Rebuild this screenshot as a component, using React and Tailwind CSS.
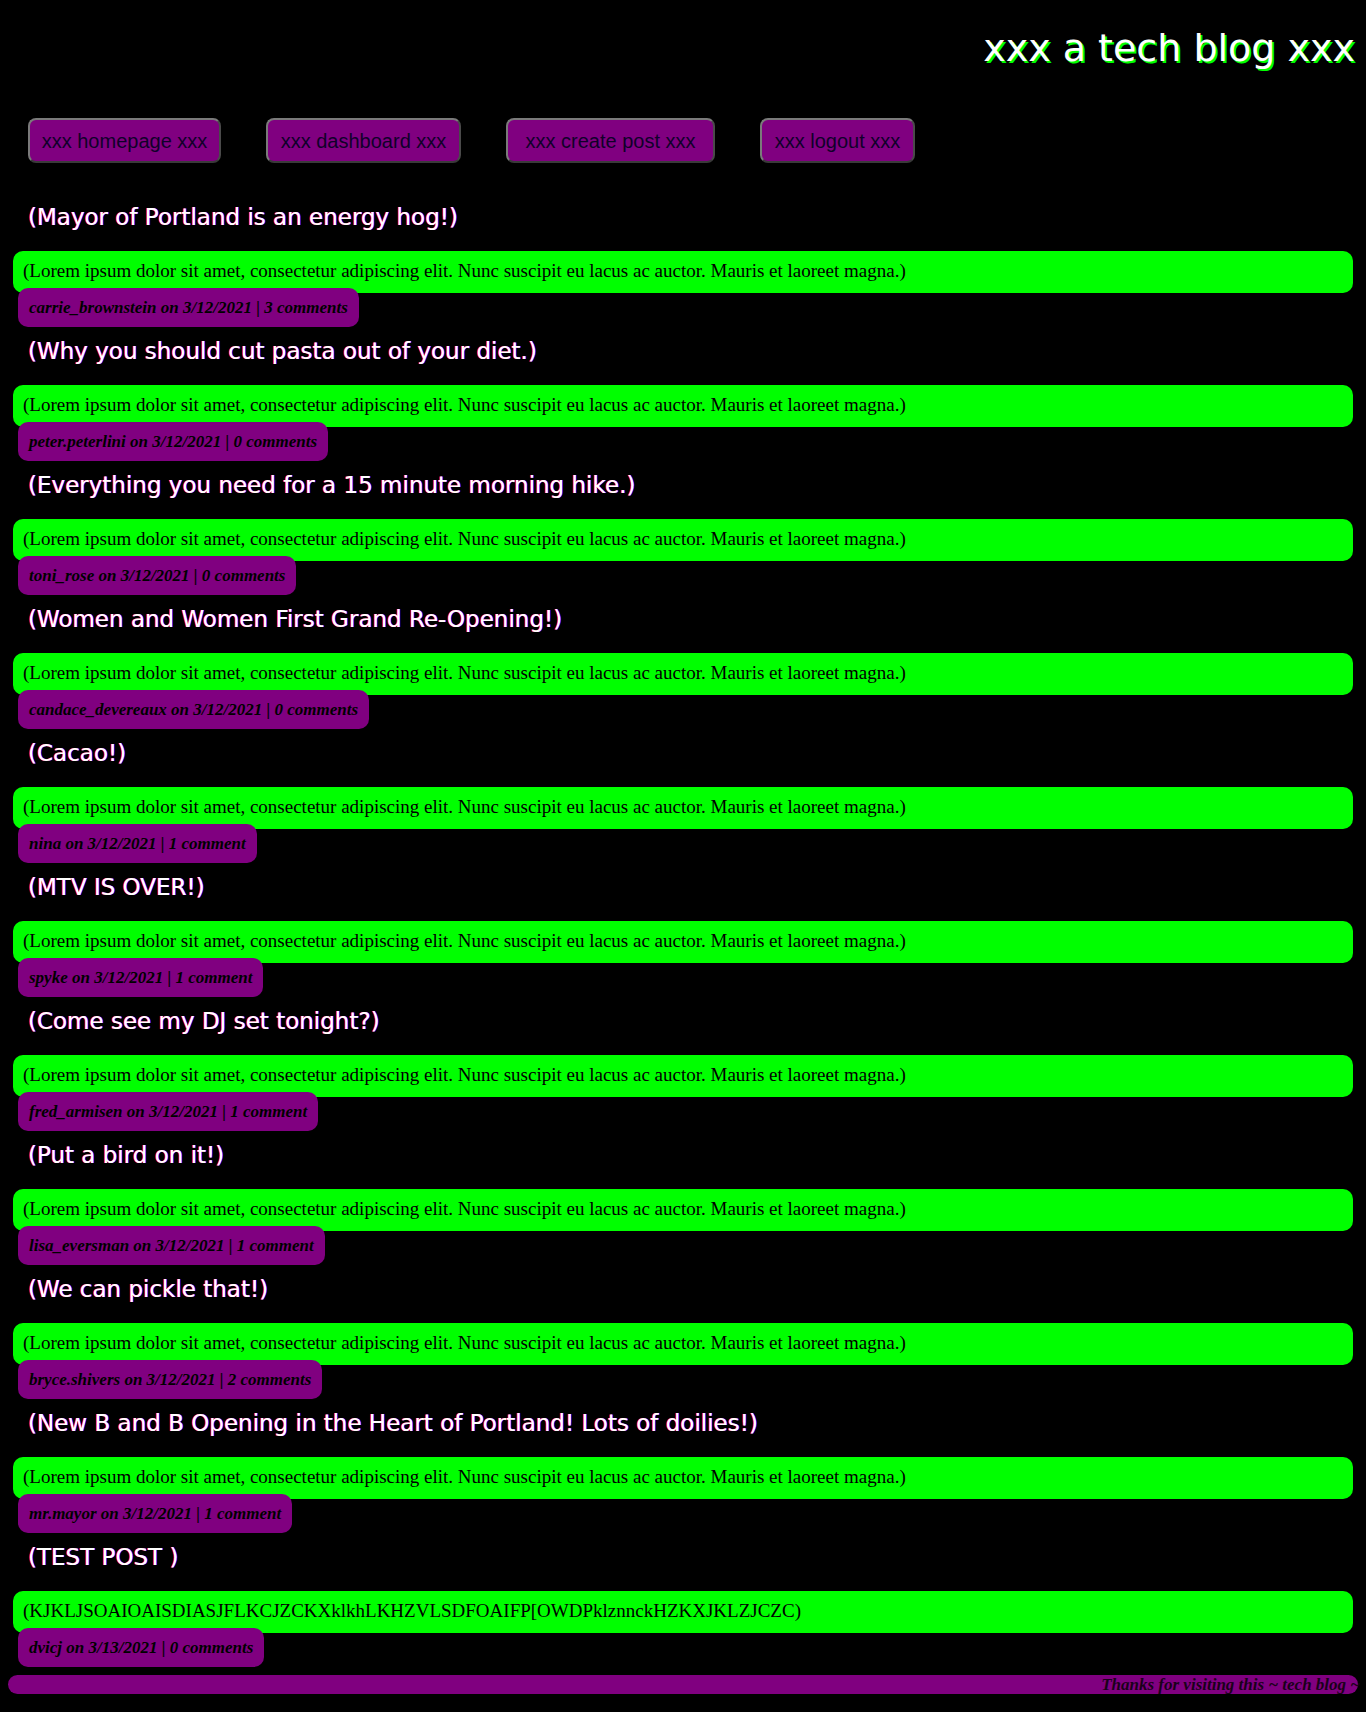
import React from 'react';

const lorem =
  'Lorem ipsum dolor sit amet, consectetur adipiscing elit. Nunc suscipit eu lacus ac auctor. Mauris et laoreet magna.';

const posts = [
  { title: 'Mayor of Portland is an energy hog!', body: lorem, user: 'carrie_brownstein', date: '3/12/2021', comments: '3 comments' },
  { title: 'Why you should cut pasta out of your diet.', body: lorem, user: 'peter.peterlini', date: '3/12/2021', comments: '0 comments' },
  { title: 'Everything you need for a 15 minute morning hike.', body: lorem, user: 'toni_rose', date: '3/12/2021', comments: '0 comments' },
  { title: 'Women and Women First Grand Re-Opening!', body: lorem, user: 'candace_devereaux', date: '3/12/2021', comments: '0 comments' },
  { title: 'Cacao!', body: lorem, user: 'nina', date: '3/12/2021', comments: '1 comment' },
  { title: 'MTV IS OVER!', body: lorem, user: 'spyke', date: '3/12/2021', comments: '1 comment' },
  { title: 'Come see my DJ set tonight?', body: lorem, user: 'fred_armisen', date: '3/12/2021', comments: '1 comment' },
  { title: 'Put a bird on it!', body: lorem, user: 'lisa_eversman', date: '3/12/2021', comments: '1 comment' },
  { title: 'We can pickle that!', body: lorem, user: 'bryce.shivers', date: '3/12/2021', comments: '2 comments' },
  { title: 'New B and B Opening in the Heart of Portland! Lots of doilies!', body: lorem, user: 'mr.mayor', date: '3/12/2021', comments: '1 comment' },
  { title: 'TEST POST ', body: 'KJKLJSOAIOAISDIASJFLKCJZCKXklkhLKHZVLSDFOAIFP[OWDPklznnckHZKXJKLZJCZC', user: 'dvicj', date: '3/13/2021', comments: '0 comments' },
];

const navLinks = [
  { label: 'xxx homepage xxx', width: 'w-[193px]' },
  { label: 'xxx dashboard xxx', width: 'w-[195px]' },
  { label: 'xxx create post xxx', width: 'w-[209px]' },
  { label: 'xxx logout xxx', width: 'w-[155px]' },
];

const Post = ({ post }) => (
  <div className="flex flex-col">
    {/* title */}
    <h2 className="pl-[28px] text-[23px] leading-[30px] text-white font-['DejaVu_Sans',sans-serif] [text-shadow:-1px_0_#ff0000,1px_0_#0000ff] whitespace-pre">
      ({post.title})
    </h2>
    {/* body */}
    <div className="mt-[19px] mx-[13px] h-[42px] rounded-[10px] bg-[#00ff00] pl-[10px] pt-[8px] pb-[10px] text-[19px] leading-[24px] text-black font-['Liberation_Serif',serif] whitespace-nowrap overflow-hidden">
      ({post.body})
    </div>
    {/* meta */}
    <div className="ml-[18px] mt-[-5px] self-start h-[39px] rounded-[10px] bg-[#800080] px-[11px] pt-[9px] pb-[9px] text-[17px] leading-[21px] italic font-bold text-black font-['Liberation_Serif',serif] whitespace-nowrap">
      {post.user} on {post.date} | {post.comments}
    </div>
  </div>
);

export default function App() {
  return (
    <div className="min-h-screen bg-black overflow-hidden pb-[18px]">
      {/* Header */}
      <header className="pt-[28px] pr-[11px] text-right">
        <h1 className="text-[38px] leading-[40px] text-white font-['DejaVu_Sans',sans-serif] [text-shadow:2px_2px_#00ff00]">
          xxx a tech blog xxx
        </h1>
      </header>

      {/* Nav */}
      <nav className="mt-[50px] flex gap-[45px] pl-[28px]">
        {navLinks.map((link) => (
          <button
            key={link.label}
            className={`${link.width} h-[45px] flex items-center justify-center rounded-[8px] border-2 border-[#7a7a7a] border-b-[#3a3a3a] border-r-[#4a4a4a] bg-[#800080] text-[20px] text-[#10002a] font-['Liberation_Sans',sans-serif] whitespace-nowrap`}
          >
            {link.label}
          </button>
        ))}
      </nav>

      {/* Posts */}
      <main className="mt-[39px] flex flex-col gap-[9px]">
        {posts.map((post, i) => (
          <Post key={i} post={post} />
        ))}
      </main>

      {/* Footer */}
      <footer className="mt-[8px] mx-[8px] h-[19px] rounded-full bg-[#800080] flex justify-end">
        <span className="mr-[-2px] text-[17px] leading-[19px] italic font-bold text-[#1a001a] font-['Liberation_Serif',serif] whitespace-nowrap">
          Thanks for visiting this ~ tech blog ~
        </span>
      </footer>
    </div>
  );
}
